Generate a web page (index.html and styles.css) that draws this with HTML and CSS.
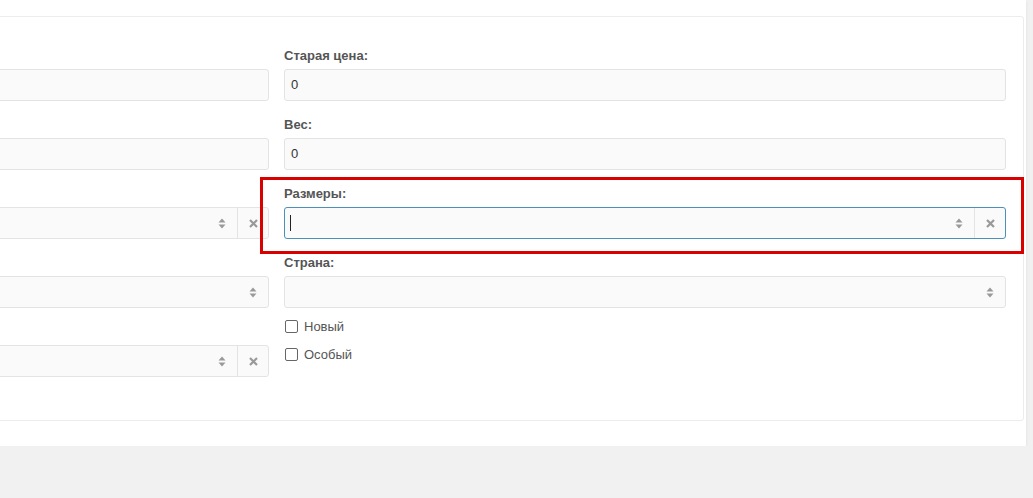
FILE: index.html
```html
<!DOCTYPE html>
<html lang="ru">
<head>
  <meta charset="UTF-8" />
  <title>Товар</title>
  <link rel="stylesheet" href="styles.css">
</head>
<body>

  <div class="panel">
    <div class="box">
      <div class="columns">

        <!-- left column is scrolled out of view, only its fields show -->
        <div class="col">
          <div class="form-group">
            <label></label>
            <div class="input"></div>
          </div>
          <div class="form-group">
            <label></label>
            <div class="input"></div>
          </div>
          <div class="form-group">
            <label></label>
            <div class="select with-clear">
              <div class="select-value"></div>
              <span class="arrows"><svg width="8" height="11" viewBox="0 0 8 11"><path d="M4 0.5 L7.5 4.5 L0.5 4.5 Z M4 10.5 L7.5 6.5 L0.5 6.5 Z" fill="#999"/></svg></span>
              <span class="clear"><svg width="9" height="9" viewBox="0 0 9 9"><path d="M1 1 L8 8 M8 1 L1 8" stroke="#999" stroke-width="2.2"/></svg></span>
            </div>
          </div>
          <div class="form-group">
            <label></label>
            <div class="select">
              <div class="select-value"></div>
              <span class="arrows"><svg width="8" height="11" viewBox="0 0 8 11"><path d="M4 0.5 L7.5 4.5 L0.5 4.5 Z M4 10.5 L7.5 6.5 L0.5 6.5 Z" fill="#999"/></svg></span>
            </div>
          </div>
          <div class="form-group">
            <label></label>
            <div class="select with-clear">
              <div class="select-value"></div>
              <span class="arrows"><svg width="8" height="11" viewBox="0 0 8 11"><path d="M4 0.5 L7.5 4.5 L0.5 4.5 Z M4 10.5 L7.5 6.5 L0.5 6.5 Z" fill="#999"/></svg></span>
              <span class="clear"><svg width="9" height="9" viewBox="0 0 9 9"><path d="M1 1 L8 8 M8 1 L1 8" stroke="#999" stroke-width="2.2"/></svg></span>
            </div>
          </div>
        </div>

        <div class="col">
          <div class="form-group">
            <label>Старая цена:</label>
            <div class="input">0</div>
          </div>
          <div class="form-group">
            <label>Вес:</label>
            <div class="input">0</div>
          </div>
          <div class="form-group">
            <label>Размеры:</label>
            <div class="select with-clear focused">
              <div class="select-value"><span class="caret"></span></div>
              <span class="arrows"><svg width="8" height="11" viewBox="0 0 8 11"><path d="M4 0.5 L7.5 4.5 L0.5 4.5 Z M4 10.5 L7.5 6.5 L0.5 6.5 Z" fill="#999"/></svg></span>
              <span class="clear"><svg width="9" height="9" viewBox="0 0 9 9"><path d="M1 1 L8 8 M8 1 L1 8" stroke="#999" stroke-width="2.2"/></svg></span>
            </div>
          </div>
          <div class="form-group">
            <label>Страна:</label>
            <div class="select">
              <div class="select-value"></div>
              <span class="arrows"><svg width="8" height="11" viewBox="0 0 8 11"><path d="M4 0.5 L7.5 4.5 L0.5 4.5 Z M4 10.5 L7.5 6.5 L0.5 6.5 Z" fill="#999"/></svg></span>
            </div>
          </div>
          <div class="checkbox"><span class="box-check"></span>Новый</div>
          <div class="checkbox"><span class="box-check"></span>Особый</div>
        </div>

      </div>
    </div>
  </div>

  <div class="highlight"></div>

</body>
</html>
```

FILE: styles.css
```css
body {
  margin: 0;
  background-color: #f1f1f1;
  font-family: "Liberation Sans", Arial, sans-serif;
  font-size: 13px;
  color: #333;
  overflow: hidden;
}
.panel {
  width: 1497px;
  margin-left: -471px;
  padding-top: 16px;
  padding-bottom: 25px;
  background-color: #fff;
  box-shadow: 0 1px 3px rgba(0, 0, 0, 0.08);
}
.box {
  margin-right: 2px;
  border: 1px solid #ececec;
  border-radius: 3px;
  padding: 30px 16px 28px 17px;
}
.columns {
  display: grid;
  grid-template-columns: 722px 722px;
  column-gap: 15px;
}
.form-group {
  margin-bottom: 15px;
}
label {
  display: block;
  height: 18px;
  font-weight: bold;
  color: #555;
  line-height: 18px;
  margin-bottom: 4px;
}
.input, .select {
  box-sizing: border-box;
  height: 32px;
  border: 1px solid #e3e3e3;
  border-radius: 3px;
  background-color: #fafafa;
}
.input {
  padding-left: 6px;
  line-height: 30px;
}
.select {
  display: flex;
  align-items: center;
}
.select-value {
  flex: 1;
  height: 30px;
  display: flex;
  align-items: center;
  padding-left: 5px;
}
.arrows {
  width: 32px;
  display: flex;
  justify-content: center;
  align-items: center;
  margin-right: -1px;
}
.clear {
  width: 30px;
  height: 30px;
  border-left: 1px solid #e3e3e3;
  display: flex;
  justify-content: center;
  align-items: center;
}
.focused {
  border-color: #4a90b8;
}
.caret {
  display: block;
  width: 1px;
  height: 16px;
  background-color: #222;
}
.checkbox {
  display: flex;
  align-items: center;
  height: 18px;
  margin-bottom: 10px;
  margin-top: -6px;
  color: #555;
}
.checkbox + .checkbox {
  margin-top: 0;
}
.box-check {
  box-sizing: border-box;
  width: 13px;
  height: 13px;
  border: 1px solid #666;
  border-radius: 2px;
  margin-left: 1px;
  margin-right: 6px;
  background-color: #fff;
}
.highlight {
  position: absolute;
  left: 260px;
  top: 177px;
  width: 758px;
  height: 71px;
  border: 3px solid #d90000;
}
```
